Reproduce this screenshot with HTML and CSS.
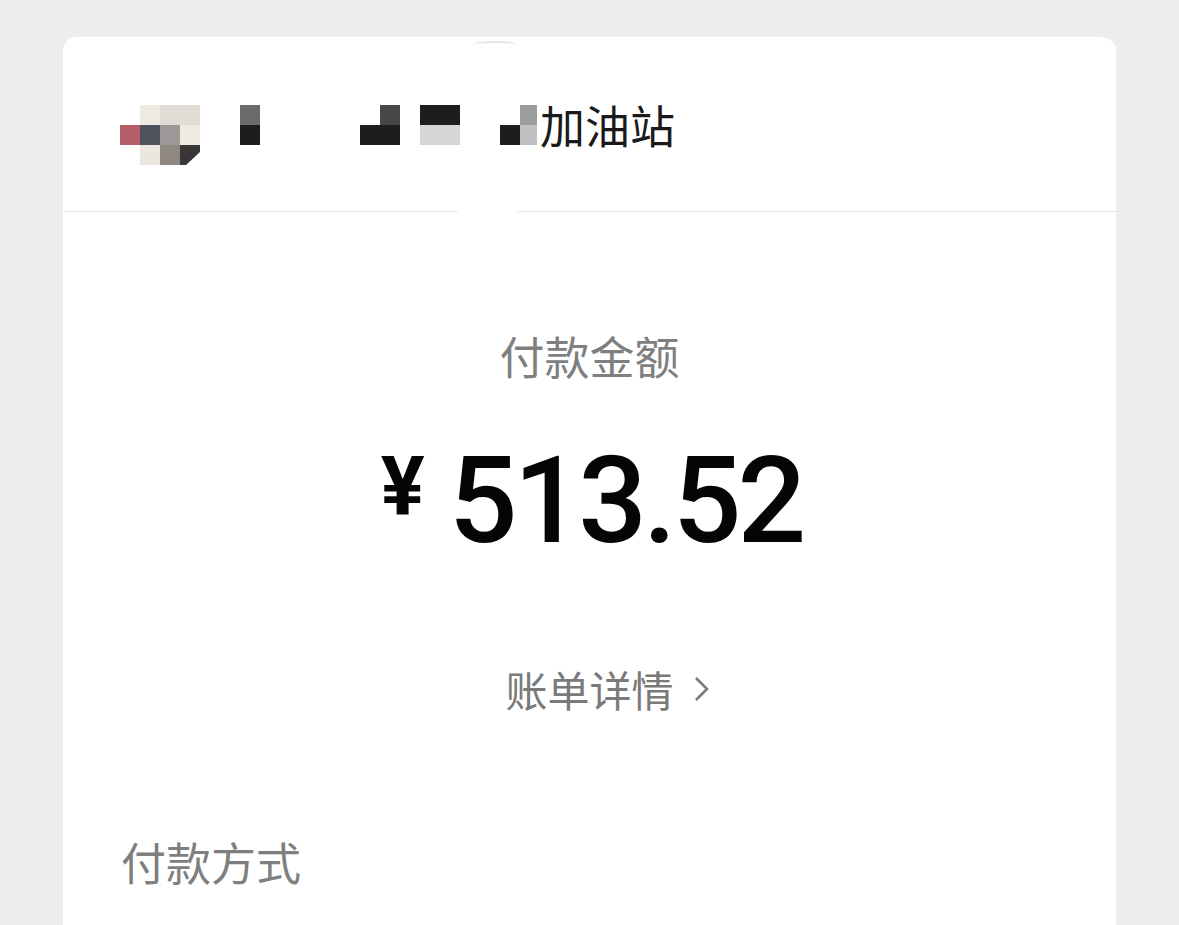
FILE: index.html
```html
<!DOCTYPE html>
<html lang="zh-CN">
<head>
    <meta charset="UTF-8">
    <meta name="viewport" content="width=device-width, initial-scale=1.0">
    <title>付款</title>
    <link rel="stylesheet" href="styles.css">
</head>
<body>
    <div class="card">
        <!-- Merchant header -->
        <header class="merchant">
            <span class="notch"></span>
            <div class="logo">
                <i></i><i class="c-cream"></i><i class="c-sand"></i><i class="c-sand"></i>
                <i class="c-rose"></i><i class="c-slate"></i><i class="c-gray"></i><i class="c-cream"></i>
                <i></i><i class="c-cream2"></i><i class="c-taupe"></i><i class="c-dark cut"></i>
            </div>
            <div class="name">
                <div class="mosaic">
                    <span class="col"><i class="g6"></i><i class="g1"></i></span>
                    <span class="col"><i></i><i></i></span>
                    <span class="col"><i></i><i></i></span>
                    <span class="col"><i></i><i></i></span>
                    <span class="col"><i></i><i></i></span>
                    <span class="col"><i></i><i></i></span>
                    <span class="col"><i></i><i class="g1"></i></span>
                    <span class="col"><i class="g4"></i><i class="g1"></i></span>
                    <span class="col"><i></i><i></i></span>
                    <span class="col"><i class="g1"></i><i class="gd"></i></span>
                    <span class="col"><i class="g1"></i><i class="gd"></i></span>
                    <span class="col"><i></i><i></i></span>
                    <span class="col"><i></i><i></i></span>
                    <span class="col"><i></i><i class="g1"></i></span>
                    <span class="col narrow"><i class="g9"></i><i class="gc"></i></span>
                </div>
                <span class="name-text">加油站</span>
            </div>
            <span class="gap"></span>
        </header>

        <!-- Amount -->
        <section class="amount">
            <p class="amount-label">付款金额</p>
            <div class="amount-value">
                <span class="currency">¥</span>
                <span class="digits">513.52</span>
            </div>
            <a class="bill-link" href="#">
                账单详情
                <svg width="16" height="26" viewBox="0 0 16 26">
                    <polyline points="2,2 13,13 2,24" fill="none" stroke="#7a7a7a" stroke-width="2.6"/>
                </svg>
            </a>
        </section>

        <!-- Payment method -->
        <section class="method">
            <h3>付款方式</h3>
        </section>
    </div>
</body>
</html>
```

FILE: styles.css
```css
* {
    margin: 0;
    padding: 0;
    box-sizing: border-box;
}

body {
    font-family: "Noto Sans CJK SC", "Noto Sans", sans-serif;
    background: #ededed;
    padding: 37px 63px 0;
    height: 925px;
    overflow: hidden;
}

.card {
    background: #fff;
    border-radius: 14px 14px 0 0;
    height: 888px;
}

/* Header */
.merchant {
    position: relative;
    height: 175px;
    border-bottom: 1px solid #e6e6e6;
    padding: 68px 0 0 57px;
    display: flex;
    align-items: flex-start;
}

.notch {
    position: absolute;
    left: 410px;
    top: 4px;
    width: 44px;
    height: 8px;
    border-top: 2px solid #e4e4e4;
    border-radius: 50% 50% 0 0;
}

.gap {
    position: absolute;
    left: 395px;
    bottom: -1px;
    width: 59px;
    height: 1px;
    background: #fff;
}

.logo {
    display: grid;
    grid-template-columns: repeat(4, 20px);
    grid-auto-rows: 20px;
    margin-right: 40px;
}

.logo i {
    display: block;
}

.c-cream { background: #efebe3; }
.c-cream2 { background: #ebe7de; }
.c-sand { background: #e0dcd5; }
.c-rose { background: #b65c69; }
.c-slate { background: #4f525a; }
.c-gray { background: #9b9897; }
.c-taupe { background: #8e8880; }
.c-dark { background: #383636; }

.cut {
    clip-path: polygon(0 0, 100% 0, 100% 35%, 30% 100%, 0 100%);
}

.name {
    display: flex;
    align-items: flex-start;
}

.mosaic {
    display: flex;
}

.mosaic .col {
    display: flex;
    flex-direction: column;
    width: 20px;
}

.mosaic .col.narrow {
    width: 17px;
}

.mosaic i {
    display: block;
    height: 20px;
}

.g1 { background: #1d1d1d; }
.g4 { background: #474747; }
.g6 { background: #6a6a6a; }
.g9 { background: #9c9c9c; }
.gc { background: #c1c1c1; }
.gd { background: #d6d6d6; }

.name-text {
    font-size: 45px;
    line-height: 40px;
    color: #1a1a1a;
    margin-left: 3px;
}

/* Amount */
.amount {
    display: flex;
    flex-direction: column;
    align-items: center;
    padding-top: 121px;
}

.amount-label {
    font-size: 45px;
    line-height: 45px;
    color: #7f7f7f;
}

.amount-value {
    display: flex;
    align-items: flex-start;
    margin-top: 63px;
    margin-right: -4px;
    color: #050505;
    font-family: Roboto, "Liberation Sans", sans-serif;
}

.currency {
    font-size: 82px;
    line-height: 82px;
    font-weight: 700;
    margin: 4px 24px 0 0;
}

.digits {
    font-size: 121px;
    line-height: 120px;
    font-weight: 500;
    letter-spacing: -4px;
}

.bill-link {
    display: flex;
    align-items: center;
    gap: 20px;
    margin-top: 107px;
    padding-left: 36px;
    font-size: 42px;
    line-height: 42px;
    color: #7a7a7a;
    text-decoration: none;
}

/* Payment method */
.method {
    padding: 129px 0 0 58px;
}

.method h3 {
    font-size: 45px;
    line-height: 45px;
    font-weight: 400;
    color: #7f7f7f;
}
```
